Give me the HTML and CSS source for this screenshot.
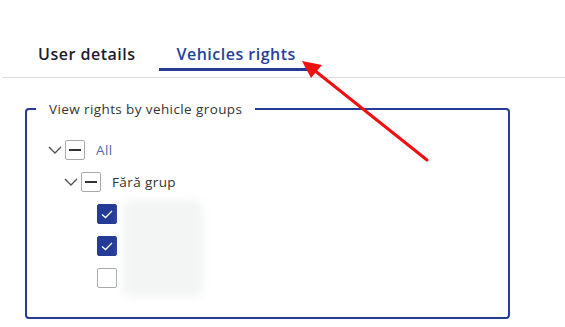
FILE: index.html
```html
<!DOCTYPE html>
<html>
<head>
<meta charset="utf-8">
<link rel="stylesheet" href="styles.css">
</head>
<body>
<div class="page">
  <nav class="tabs">
    <div class="tab">User details</div>
    <div class="tab active">Vehicles rights</div>
  </nav>
  <fieldset class="group">
    <legend>View rights by vehicle groups</legend>
    <ul class="tree">
      <li class="row lvl0">
        <span class="chev"><svg viewBox="0 0 14 8" width="14" height="8"><path d="M1 1 L7 7 L13 1" fill="none" stroke="#555" stroke-width="1.4"/></svg></span>
        <span class="cb partial"></span>
        <span class="label all">All</span>
      </li>
      <li class="row lvl1">
        <span class="chev"><svg viewBox="0 0 14 8" width="14" height="8"><path d="M1 1 L7 7 L13 1" fill="none" stroke="#555" stroke-width="1.4"/></svg></span>
        <span class="cb partial"></span>
        <span class="label">Fără grup</span>
      </li>
      <li class="row lvl2">
        <span class="chev"></span>
        <span class="cb checked"><svg viewBox="0 0 20 20" width="20" height="20"><path d="M5 10.5 L8.5 13.5 L15 7" fill="none" stroke="#fff" stroke-width="1.3"/></svg></span>
      </li>
      <li class="row lvl2">
        <span class="chev"></span>
        <span class="cb checked"><svg viewBox="0 0 20 20" width="20" height="20"><path d="M5 10.5 L8.5 13.5 L15 7" fill="none" stroke="#fff" stroke-width="1.3"/></svg></span>
      </li>
      <li class="row lvl2">
        <span class="chev"></span>
        <span class="cb"></span>
      </li>
    </ul>
    <div class="redacted"></div>
  </fieldset>
  <svg class="arrow" width="565" height="327" viewBox="0 0 565 327">
    <line x1="427" y1="160" x2="314" y2="70" stroke="#f01010" stroke-width="3" stroke-linecap="round"/>
    <polygon points="302,61 322,65 311,78" fill="#f01010"/>
  </svg>
</div>
</body>
</html>
```
FILE: styles.css
```css
html, body {
  margin: 0;
  padding: 0;
  background: #fff;
}
body {
  font-family: "Open Sans", "Liberation Sans", sans-serif;
  color: #333;
}
.page {
  position: relative;
  width: 565px;
  height: 327px;
  overflow: hidden;
}
.tabs {
  display: flex;
  gap: 7px;
  margin-left: 2px;
  padding: 42px 0 6px 19px;
  border-bottom: 1px solid #dcdcdc;
}
.tab {
  font-size: 16px;
  font-weight: 600;
  letter-spacing: 0.5px;
  line-height: 24px;
  padding: 0 17px 2px;
  border-bottom: 3px solid transparent;
  color: #1d1d2b;
}
.tab.active {
  color: #27419a;
  border-bottom-color: #243c96;
}
.group {
  position: relative;
  box-sizing: border-box;
  width: 485px;
  margin: 23px 0 0 25px;
  padding: 0 9px 23px;
  border: 2px solid #243c96;
  border-radius: 4px;
  min-width: 0;
}
.group legend {
  padding: 0 13px;
  font-size: 13.5px;
  letter-spacing: 0.4px;
  line-height: 16px;
  color: #333;
}
.tree {
  list-style: none;
  margin: 17px 0 0 12px;
  padding: 0;
}
.row {
  display: flex;
  align-items: center;
  height: 32px;
}
.lvl1 { padding-left: 16px; }
.lvl2 { padding-left: 32px; }
.chev {
  width: 14px;
  height: 8px;
  margin-right: 3px;
  display: flex;
}
.cb {
  box-sizing: border-box;
  width: 20px;
  height: 20px;
  border: 1.5px solid #a9a9a9;
  border-radius: 2px;
  position: relative;
  display: flex;
  align-items: center;
  justify-content: center;
}
.cb.partial::after {
  content: "";
  width: 12px;
  height: 2px;
  background: #333;
}
.cb.checked {
  background: #243c96;
  border-color: #243c96;
}
.cb.checked svg {
  position: absolute;
  left: -1.5px;
  top: -1.5px;
}
.label {
  margin-left: 11px;
  font-size: 13.5px;
  letter-spacing: 0.4px;
  color: #333;
}
.label.all {
  color: #5068ac;
}
.redacted {
  position: absolute;
  left: 96px;
  top: 83px;
  width: 80px;
  height: 97px;
  background: #f3f4f4;
  filter: blur(4px);
  border-radius: 8px;
}
.arrow {
  position: absolute;
  left: 0;
  top: 0;
  pointer-events: none;
}
```
